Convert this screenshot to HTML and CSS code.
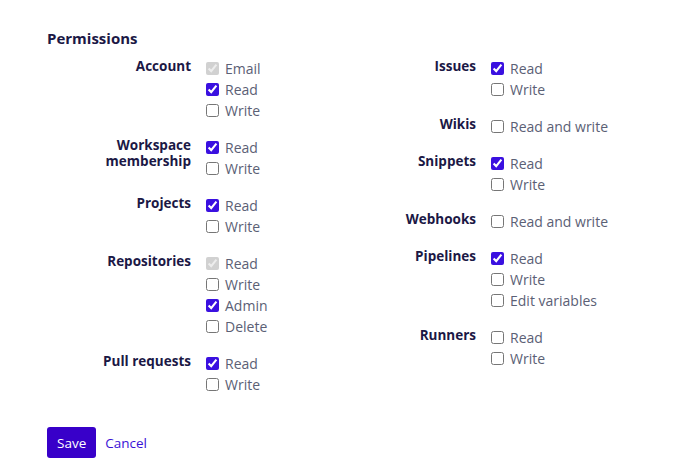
FILE: index.html
```html
<!DOCTYPE html>
<html lang="en">
<head>
  <meta charset="UTF-8">
  <meta name="viewport" content="width=device-width, initial-scale=1.0">
  <title>Permissions</title>
  <link rel="stylesheet" href="styles.css">
</head>
<body>
  <form class="perm-form">
    <h2 class="perm-title">Permissions</h2>

    <div class="perm-grid">
      <div class="perm-col">
        <div class="perm-group">
          <div class="perm-name">Account</div>
          <div class="perm-opts">
            <label class="opt"><input type="checkbox" checked disabled> Email</label>
            <label class="opt"><input type="checkbox" checked> Read</label>
            <label class="opt"><input type="checkbox"> Write</label>
          </div>
        </div>
        <div class="perm-group">
          <div class="perm-name">Workspace membership</div>
          <div class="perm-opts">
            <label class="opt"><input type="checkbox" checked> Read</label>
            <label class="opt"><input type="checkbox"> Write</label>
          </div>
        </div>
        <div class="perm-group">
          <div class="perm-name">Projects</div>
          <div class="perm-opts">
            <label class="opt"><input type="checkbox" checked> Read</label>
            <label class="opt"><input type="checkbox"> Write</label>
          </div>
        </div>
        <div class="perm-group">
          <div class="perm-name">Repositories</div>
          <div class="perm-opts">
            <label class="opt"><input type="checkbox" checked disabled> Read</label>
            <label class="opt"><input type="checkbox"> Write</label>
            <label class="opt"><input type="checkbox" checked> Admin</label>
            <label class="opt"><input type="checkbox"> Delete</label>
          </div>
        </div>
        <div class="perm-group">
          <div class="perm-name">Pull requests</div>
          <div class="perm-opts">
            <label class="opt"><input type="checkbox" checked> Read</label>
            <label class="opt"><input type="checkbox"> Write</label>
          </div>
        </div>
      </div>

      <div class="perm-col">
        <div class="perm-group">
          <div class="perm-name">Issues</div>
          <div class="perm-opts">
            <label class="opt"><input type="checkbox" checked> Read</label>
            <label class="opt"><input type="checkbox"> Write</label>
          </div>
        </div>
        <div class="perm-group">
          <div class="perm-name">Wikis</div>
          <div class="perm-opts">
            <label class="opt"><input type="checkbox"> Read and write</label>
          </div>
        </div>
        <div class="perm-group">
          <div class="perm-name">Snippets</div>
          <div class="perm-opts">
            <label class="opt"><input type="checkbox" checked> Read</label>
            <label class="opt"><input type="checkbox"> Write</label>
          </div>
        </div>
        <div class="perm-group">
          <div class="perm-name">Webhooks</div>
          <div class="perm-opts">
            <label class="opt"><input type="checkbox"> Read and write</label>
          </div>
        </div>
        <div class="perm-group">
          <div class="perm-name">Pipelines</div>
          <div class="perm-opts">
            <label class="opt"><input type="checkbox" checked> Read</label>
            <label class="opt"><input type="checkbox"> Write</label>
            <label class="opt"><input type="checkbox"> Edit variables</label>
          </div>
        </div>
        <div class="perm-group">
          <div class="perm-name">Runners</div>
          <div class="perm-opts">
            <label class="opt"><input type="checkbox"> Read</label>
            <label class="opt"><input type="checkbox"> Write</label>
          </div>
        </div>
      </div>
    </div>

    <div class="actions">
      <button type="button" class="btn-save">Save</button>
      <a href="#" class="cancel">Cancel</a>
    </div>
  </form>
</body>
</html>
```

FILE: styles.css
```css
body {
  margin: 0;
  font-family: "Open Sans", "Noto Sans", sans-serif;
  background: #fff;
  color: #1b1845;
}

.perm-form {
  padding: 28px 47px 0;
}

.perm-title {
  margin: 0 0 10px;
  font-size: 15px;
  line-height: 20px;
  font-weight: 700;
}

.perm-grid {
  display: grid;
  grid-template-columns: 285px 285px;
}

.perm-group {
  display: grid;
  grid-template-columns: 144px 1fr;
  column-gap: 15px;
  margin-bottom: 16px;
}

.perm-name {
  text-align: right;
  font-size: 13.5px;
  font-weight: 700;
  line-height: 16px;
}

.perm-opts {
  display: flex;
  flex-direction: column;
}

.opt {
  display: flex;
  align-items: center;
  gap: 6px;
  height: 21px;
  font-size: 14px;
  color: #5b6075;
}

.opt input {
  margin: 0;
  width: 13px;
  height: 13px;
  accent-color: #3a10e0;
}

.actions {
  display: flex;
  align-items: center;
  gap: 9px;
  margin-top: 16px;
}

.btn-save {
  height: 31px;
  padding: 0 10px;
  border: none;
  border-radius: 3px;
  background: #3800c9;
  color: #fff;
  font-family: inherit;
  font-size: 13.5px;
  cursor: pointer;
}

.cancel {
  color: #3a12d6;
  text-decoration: none;
  font-size: 13.5px;
}
```
